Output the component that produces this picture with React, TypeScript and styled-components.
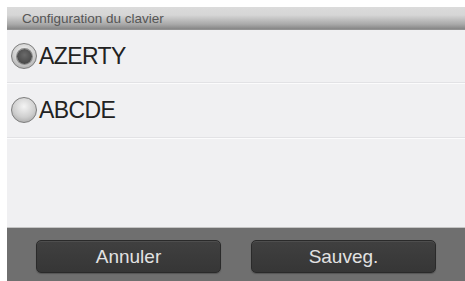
import React, { FunctionComponent } from "react";
import styled, { createGlobalStyle } from "styled-components";

const GlobalStyle = createGlobalStyle`
  html, body {
    margin: 0;
    padding: 0;
    background: #ffffff;
  }
  body {
    font-family: "Liberation Sans", Arial, sans-serif;
  }
`;

const Page = styled.div`
  width: 465px;
  height: 281px;
  padding: 7px 0 0 7px;
  box-sizing: border-box;
  background: #ffffff;
  overflow: hidden;
`;

const Screen = styled.div`
  width: 458px;
  height: 274px;
  display: flex;
  flex-direction: column;
  background: #f0f0f2;
`;

const Header = styled.div`
  height: 23px;
  flex-shrink: 0;
  display: flex;
  align-items: center;
  padding-left: 15px;
  font-size: 13.5px;
  color: #555555;
  background: linear-gradient(
    to bottom,
    #dbdbdb 0%,
    #d6d6d6 35%,
    #a9a9a9 75%,
    #878787 95%,
    #9a9a9a 100%
  );
`;

const List = styled.ul`
  margin: 0;
  padding: 0;
  flex: 1;
`;

const Row = styled.li<{ $h: number }>`
  list-style: none;
  height: ${(p) => p.$h}px;
  display: flex;
  align-items: center;
  gap: 2px;
  padding-left: 4px;
  border-bottom: 1px solid #e2e2e5;
  box-shadow: 0 1px 0 #fbfbfc;
  font-size: 23px;
  letter-spacing: -0.6px;
  color: #222222;
`;

const Radio = styled.span<{ $on: boolean }>`
  width: 26px;
  height: 26px;
  box-sizing: border-box;
  border-radius: 50%;
  flex-shrink: 0;
  display: flex;
  align-items: center;
  justify-content: center;
  border: 1.5px solid #7d7d7d;
  background: radial-gradient(
    circle at 50% 35%,
    #f4f4f4 0%,
    #cfcfcf 55%,
    #9b9b9b 100%
  );

  &::after {
    content: "";
    display: ${(p) => (p.$on ? "block" : "none")};
    width: 15px;
    height: 15px;
    border-radius: 50%;
    background: radial-gradient(circle at 50% 40%, #6a6a6a 0%, #4a4a4a 70%, #3a3a3a 100%);
    box-shadow: 0 0 0 1px #8a8a8a;
  }
`;

const Footer = styled.div`
  height: 54px;
  flex-shrink: 0;
  box-sizing: border-box;
  display: flex;
  gap: 30px;
  padding: 12px 29px 9px 29px;
  background: #6f6f6f;
  border-top: 1px solid #c4c4c4;
`;

const Button = styled.button`
  flex: 1;
  height: 33px;
  border: 1px solid #2a2a2a;
  border-radius: 5px;
  background: linear-gradient(to bottom, #404040, #363636);
  box-shadow: inset 0 1px 0 #4e4e4e, 0 1px 1px #555;
  color: #e2e2e2;
  font-family: "Liberation Sans", Arial, sans-serif;
  font-size: 19px;
  padding: 0;
  cursor: pointer;
`;

const options = [
  { label: "AZERTY", on: true, h: 52 },
  { label: "ABCDE", on: false, h: 54 },
];

const App: FunctionComponent = () => (
  <>
    <GlobalStyle />
    <Page>
      <Screen>
        <Header>Configuration du clavier</Header>
        <List>
          {options.map((o) => (
            <Row key={o.label} $h={o.h}>
              <Radio $on={o.on} />
              {o.label}
            </Row>
          ))}
        </List>
        <Footer>
          <Button>Annuler</Button>
          <Button>Sauveg.</Button>
        </Footer>
      </Screen>
    </Page>
  </>
);

export default App;
